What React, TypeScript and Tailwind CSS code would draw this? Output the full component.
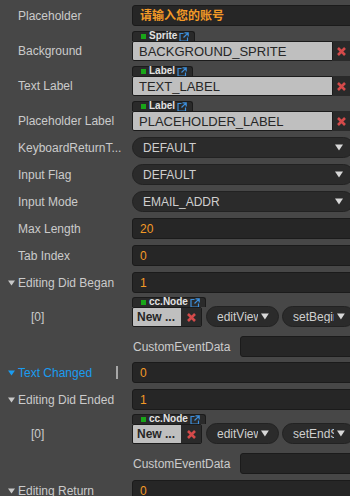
const Arrow = ({ className = "" }: { className?: string }) => (
  <svg width="8" height="7" viewBox="0 0 8 7" className={className}>
    <path d="M0 0.5 L8 0.5 L4 6.5 Z" fill="currentColor" />
  </svg>
);

const Fold = ({ color = "#c8c8c8" }: { color?: string }) => (
  <svg width="7" height="6" viewBox="0 0 7 6" className="absolute left-[8px] top-[8px]">
    <path d="M0 0.5 L7 0.5 L3.5 5.5 Z" fill={color} />
  </svg>
);

const LinkIcon = () => (
  <svg width="10" height="10" viewBox="0 0 10 10" className="ml-[2px]">
    <path d="M4.5 1.5 H1 V9 H8.5 V5.5" fill="none" stroke="#3d8fdc" strokeWidth="1.2" />
    <path d="M5.5 0.8 H9.2 V4.5 M9.2 0.8 L4.5 5.5" fill="none" stroke="#3d8fdc" strokeWidth="1.2" />
  </svg>
);

const Cross = () => (
  <svg width="9" height="9" viewBox="0 0 9 9">
    <path d="M1 1 L8 8 M8 1 L1 8" stroke="#d44a4a" strokeWidth="2.6" />
  </svg>
);

const Label = ({ text, indent = 18, fold, blue }: { text: string; indent?: number; fold?: boolean; blue?: boolean }) => (
  <div
    className={`relative w-[132px] flex-none h-[21px] flex items-center whitespace-nowrap ${blue ? "text-[#1a9cf0]" : "text-[#cbcbcb]"}`}
    style={{ paddingLeft: indent }}
  >
    {fold && <Fold color={blue ? "#1a9cf0" : "#c8c8c8"} />}
    {text}
  </div>
);

const TextBox = ({ value, cjk }: { value: string; cjk?: boolean }) => (
  <div
    className={`w-[222px] flex-none h-[21px] rounded-[3px] bg-[#262626] border border-[#1b1b1b] pl-[7px] flex items-center text-[#f39a26] ${cjk ? "font-bold" : ""}`}
  >
    {value}
  </div>
);

const Select = ({ value }: { value: string }) => (
  <div className="w-[222px] flex-none h-[21px] rounded-full bg-[#2b2b2b] border border-[#222] pl-[10px] pr-[10px] flex items-center justify-between text-[#cfcfcf]">
    <span>{value}</span>
    <Arrow className="text-[#d8d8d8]" />
  </div>
);

const Tag = ({ name }: { name: string }) => (
  <div className="h-[10px] w-fit rounded-t-[3px] bg-[#2a2a2a] border border-b-0 border-[#1b1b1b] pl-[8px] pr-[5px] flex items-center">
    <div className="w-[5px] h-[5px] bg-[#19a619] mr-[3px]" />
    <span className="text-[10px] font-bold leading-none text-[#e2e2e2] -mt-[1px]">{name}</span>
    <LinkIcon />
  </div>
);

const ObjectRow = ({ label, tag, value, mt }: { label: string; tag: string; value: string; mt: string }) => (
  <div className={`flex items-end ${mt}`}>
    <Label text={label} />
    <div className="w-[218px] flex-none flex flex-col">
      <Tag name={tag} />
      <div className="flex h-[20px]">
        <div className="flex-1 bg-[#bfbfbf] border border-[#1b1b1b] rounded-l-[2px] pl-[6px] flex items-center text-[13px] text-[#262626]">
          {value}
        </div>
        <div className="w-[17px] bg-[#2a2a2a] flex items-center justify-center">
          <Cross />
        </div>
      </div>
    </div>
  </div>
);

const Pill = ({ text, w }: { text: string; w: string }) => (
  <div className={`${w} flex-none h-[21px] rounded-full bg-[#2b2b2b] border border-[#222] pl-[10px] pr-[9px] flex items-center text-[#cfcfcf]`}>
    <span className="w-[42px] overflow-hidden whitespace-nowrap">{text}</span>
    <Arrow className="ml-[3px] text-[#d8d8d8]" />
  </div>
);

const EventRow = ({ method, mt }: { method: string; mt: string }) => (
  <>
    <div className={`flex items-end ${mt}`}>
      <Label text="[0]" indent={31} />
      <div className="w-[70px] flex-none flex flex-col">
        <Tag name="cc.Node" />
        <div className="flex h-[20px] rounded-[2px] border border-[#1b1b1b] overflow-hidden">
          <div className="w-[48px] bg-[#bfbfbf] pl-[4px] flex items-center text-[#262626] font-bold">New ...</div>
          <div className="flex-1 bg-[#2a2a2a] flex items-center justify-center">
            <Cross />
          </div>
        </div>
      </div>
      <div className="flex gap-[3px] ml-[4px]">
        <Pill text="editView" w="w-[73px]" />
        <Pill text={method} w="w-[73px]" />
      </div>
    </div>
    <div className="flex items-center mt-[9px]">
      <div className="w-[133px] flex-none" />
      <div className="w-[107px] flex-none text-[#cbcbcb]">CustomEventData</div>
      <div className="w-[116px] flex-none h-[21px] rounded-[3px] bg-[#262626] border border-[#1b1b1b]" />
    </div>
  </>
);

const App = () => {
  return (
    <div
      className="w-[350px] h-[496px] overflow-hidden bg-[#474747] text-[12px] leading-none pt-[5px] flex flex-col"
      style={{ fontFamily: '"Liberation Sans", Arial, "Noto Sans CJK SC", sans-serif' }}
    >
      <div className="flex">
        <Label text="Placeholder" />
        <TextBox value="请输入您的账号" cjk />
      </div>
      <ObjectRow label="Background" tag="Sprite" value="BACKGROUND_SPRITE" mt="mt-[5px]" />
      <ObjectRow label="Text Label" tag="Label" value="TEXT_LABEL" mt="mt-[5px]" />
      <ObjectRow label="Placeholder Label" tag="Label" value="PLACEHOLDER_LABEL" mt="mt-[5px]" />

      <div className="flex mt-[6px]">
        <Label text="KeyboardReturnT..." />
        <Select value="DEFAULT" />
      </div>
      <div className="flex mt-[6px]">
        <Label text="Input Flag" />
        <Select value="DEFAULT" />
      </div>
      <div className="flex mt-[6px]">
        <Label text="Input Mode" />
        <Select value="EMAIL_ADDR" />
      </div>
      <div className="flex mt-[6px]">
        <Label text="Max Length" />
        <TextBox value="20" />
      </div>
      <div className="flex mt-[6px]">
        <Label text="Tab Index" />
        <TextBox value="0" />
      </div>
      <div className="flex mt-[6px]">
        <Label text="Editing Did Began" fold />
        <TextBox value="1" />
      </div>
      <EventRow method="setBegin" mt="mt-[4px]" />

      <div className="flex mt-[5px]">
        <div className="relative">
          <Label text="Text Changed" fold blue />
          <div className="absolute left-[116px] top-[4px] w-[2px] h-[13px] bg-[#a8a8a8]" />
        </div>
        <TextBox value="0" />
      </div>
      <div className="flex mt-[6px]">
        <Label text="Editing Did Ended" fold />
        <TextBox value="1" />
      </div>
      <EventRow method="setEndState" mt="mt-[4px]" />
      <div className="flex mt-[6px]">
        <Label text="Editing Return" fold />
        <TextBox value="0" />
      </div>
    </div>
  );
};

export default App;
